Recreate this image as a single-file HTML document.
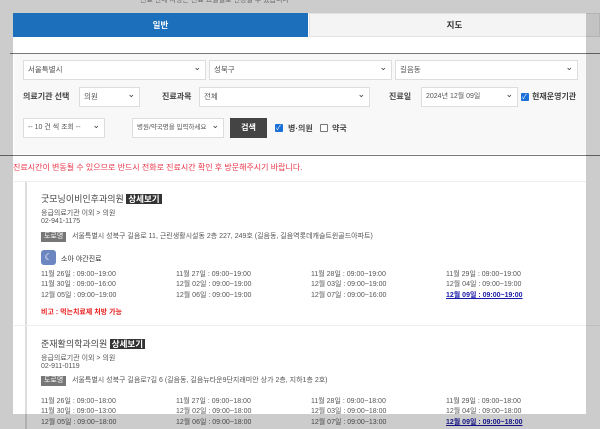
<!DOCTYPE html><html><head><meta charset="utf-8"><style>
*{margin:0;padding:0;box-sizing:border-box}
body{width:600px;height:429px;overflow:hidden;background:#fff;position:relative;font-family:"Liberation Sans","Noto Sans CJK KR",sans-serif;color:#555;font-size:7px}
.a{position:absolute;white-space:nowrap}
.sel{position:absolute;border:1px solid #ddd;background:#fff;height:20px;font-size:7.5px;line-height:18px;padding-left:4px;color:#555}
.sel:after{content:"⌄";position:absolute;right:4px;top:-3px;font-size:9px;color:#333}
.lbl{position:absolute;font-size:8px;font-weight:bold;color:#444}
.cb{position:absolute;width:8px;height:8px;border:1px solid #777;border-radius:1px;background:#fff}
.cb.on{background:#1a6fd8;border-color:#1a6fd8}
.cb.on:after{content:"✓";color:#fff;font-size:7px;position:absolute;left:0;top:-2px}
.tag{position:absolute;background:#777;color:#fff;font-size:7px;padding:0 3px;height:10px;line-height:10px}
.btn{background:#333;color:#fff;font-weight:bold;font-size:8.5px;padding:0 2px}
.sch{position:absolute;font-size:7px;color:#555}
.ov{position:absolute;background:rgba(0,0,0,0.2)}
</style></head><body>
<div class="a" style="left:140px;top:-5px;font-size:7px;color:#888">진료 안내 사항은 진료 요일별로 변경될 수 있습니다</div>
<div class="a" style="left:13px;top:13px;width:295px;height:24px;background:#1b6fbb;color:#fff;font-size:8.5px;font-weight:bold;text-align:center;line-height:24px">일반</div>
<div class="a" style="left:309px;top:13px;width:291px;height:24px;background:#f4f4f4;border:1px solid #e2e2e2;color:#333;font-size:8.5px;font-weight:bold;text-align:center;line-height:22px">지도</div>
<div class="a" style="left:10px;top:53px;width:590px;height:1px;background:#777"></div>
<div class="a" style="left:14px;top:54px;width:572px;height:100px;background:#f8f8f8"></div>
<div class="sel" style="left:23px;top:60px;width:183px">서울특별시</div>
<div class="sel" style="left:209px;top:60px;width:183px">성북구</div>
<div class="sel" style="left:395px;top:60px;width:183px">길음동</div>
<div class="lbl" style="left:23px;top:91px">의료기관 선택</div>
<div class="sel" style="left:79px;top:87px;width:61px">의원</div>
<div class="lbl" style="left:162px;top:91px">진료과목</div>
<div class="sel" style="left:199px;top:87px;width:171px">전체</div>
<div class="lbl" style="left:389px;top:91px">진료일</div>
<div class="sel" style="left:421px;top:87px;width:97px;font-size:7px">2024년 12월 09일</div>
<div class="cb on" style="left:521px;top:93px"></div>
<div class="lbl" style="left:532px;top:91px">현재운영기관</div>
<div class="sel" style="left:23px;top:118px;width:82px;font-size:7px">-- 10 건 씩 조회 --</div>
<div class="sel" style="left:132px;top:118px;width:92px;font-size:6.5px">병원/약국명을 입력하세요</div>
<div class="a" style="left:230px;top:118px;width:37px;height:20px;background:#444;color:#fff;font-size:8px;font-weight:bold;text-align:center;line-height:20px">검색</div>
<div class="cb on" style="left:275px;top:124px"></div><div class="lbl" style="left:288px;top:123px">병·의원</div>
<div class="cb" style="left:320px;top:124px"></div><div class="lbl" style="left:332px;top:123px">약국</div>
<div class="a" style="left:0;top:155px;width:600px;height:1px;background:#777"></div>
<div class="a" style="left:13px;top:162px;color:#e8364a;font-size:8px">진료시간이 변동될 수 있으므로 반드시 전화로 진료시간 확인 후 방문해주시기 바랍니다.</div>
<div class="a" style="left:14px;top:181px;width:572px;height:1px;background:#eee"></div>
<div class="a" style="left:25px;top:182px;width:2px;height:247px;background:#ddd"></div>

<div class="a" style="left:41px;top:192px;font-size:9px;color:#444">굿모닝이비인후과의원 <span class="btn">상세보기</span></div>
<div class="a" style="left:41px;top:208px">응급의료기관 이외 &gt; 의원</div>
<div class="a" style="left:41px;top:218px">02-941-1175</div>
<div class="tag" style="left:41px;top:232px">도로명</div>
<div class="a" style="left:72px;top:231px">서울특별시 성북구 길음로 11, 근린생활시설동 2층 227, 249호 (길음동, 길음역롯데캐슬트윈골드아파트)</div>
<div class="a" style="left:41px;top:250px;width:15px;height:15px;background:#6b86c0;border-radius:3px;color:#fff;font-size:9px;text-align:center;line-height:14px">☾</div>
<div class="a" style="left:61px;top:254px;color:#333">소아 야간진료</div>
<div class="sch" style="left:41px;top:269px">11월 26일 : 09:00~19:00</div><div class="sch" style="left:176px;top:269px">11월 27일 : 09:00~19:00</div><div class="sch" style="left:311px;top:269px">11월 28일 : 09:00~19:00</div><div class="sch" style="left:446px;top:269px">11월 29일 : 09:00~19:00</div>
<div class="sch" style="left:41px;top:279px">11월 30일 : 09:00~16:00</div><div class="sch" style="left:176px;top:279px">12월 02일 : 09:00~19:00</div><div class="sch" style="left:311px;top:279px">12월 03일 : 09:00~19:00</div><div class="sch" style="left:446px;top:279px">12월 04일 : 09:00~19:00</div>
<div class="sch" style="left:41px;top:290px">12월 05일 : 09:00~19:00</div><div class="sch" style="left:176px;top:290px">12월 06일 : 09:00~19:00</div><div class="sch" style="left:311px;top:290px">12월 07일 : 09:00~16:00</div><div class="sch" style="left:446px;top:290px;color:#1a1aa8;text-decoration:underline;font-weight:bold">12월 09일 : 09:00~19:00</div>
<div class="a" style="left:41px;top:307px;color:#e82020;font-weight:bold">비고 : 먹는치료제 처방 가능</div>
<div class="a" style="left:14px;top:325px;width:586px;height:1px;background:#eee"></div>

<div class="a" style="left:41px;top:337px;font-size:9px;color:#444">준재활의학과의원 <span class="btn">상세보기</span></div>
<div class="a" style="left:41px;top:353px">응급의료기관 이외 &gt; 의원</div>
<div class="a" style="left:41px;top:363px">02-911-0119</div>
<div class="tag" style="left:41px;top:376px">도로명</div>
<div class="a" style="left:72px;top:375px">서울특별시 성북구 길음로7길 6 (길음동, 길음뉴타운9단지래미안 상가 2층, 지하1층 2호)</div>
<div class="sch" style="left:41px;top:396px">11월 26일 : 09:00~18:00</div><div class="sch" style="left:176px;top:396px">11월 27일 : 09:00~18:00</div><div class="sch" style="left:311px;top:396px">11월 28일 : 09:00~18:00</div><div class="sch" style="left:446px;top:396px">11월 29일 : 09:00~18:00</div>
<div class="sch" style="left:41px;top:406px">11월 30일 : 09:00~13:00</div><div class="sch" style="left:176px;top:406px">12월 02일 : 09:00~18:00</div><div class="sch" style="left:311px;top:406px">12월 03일 : 09:00~18:00</div><div class="sch" style="left:446px;top:406px">12월 04일 : 09:00~18:00</div>
<div class="sch" style="left:41px;top:417px">12월 05일 : 09:00~18:00</div><div class="sch" style="left:176px;top:417px">12월 06일 : 09:00~18:00</div><div class="sch" style="left:311px;top:417px">12월 07일 : 09:00~13:00</div><div class="sch" style="left:446px;top:417px;color:#1a1aa8;text-decoration:underline;font-weight:bold">12월 09일 : 09:00~18:00</div>

<div class="ov" style="left:0;top:0;width:600px;height:13px"></div>
<div class="ov" style="left:0;top:13px;width:13px;height:401px"></div>
<div class="ov" style="left:586px;top:13px;width:14px;height:401px"></div>
<div class="ov" style="left:0;top:414px;width:600px;height:15px"></div>
</body></html>
